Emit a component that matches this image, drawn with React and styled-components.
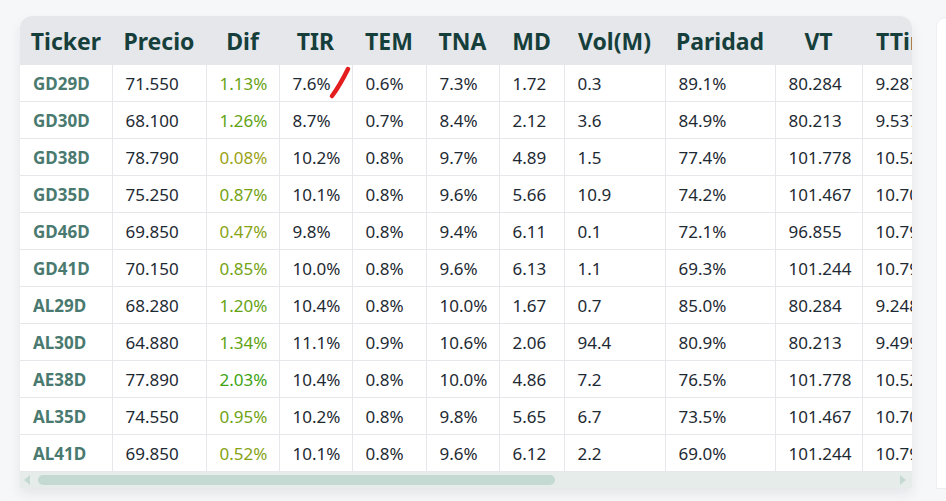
import React from 'react';
import styled, { createGlobalStyle } from 'styled-components';

const GlobalStyle = createGlobalStyle`
  html, body {
    margin: 0;
    padding: 0;
    background: #f6f7f9;
    font-family: 'Noto Sans', 'Open Sans', sans-serif;
  }
`;

const Page = styled.div`
  display: flex;
  align-items: flex-start;
  gap: 24px;
  width: 946px;
  height: 501px;
  padding: 16px 0 0 20px;
  box-sizing: border-box;
  overflow: hidden;
`;

const Card = styled.div`
  position: relative;
  flex: 0 0 892px;
  border-radius: 12px 12px 0 0;
  background: #fff;
  box-shadow: 0 6px 12px rgba(30, 40, 50, 0.08);
  overflow: hidden;
`;

const Side = styled.div`
  flex: 0 0 40px;
  height: 470px;
  margin-top: 1px;
  background: #fff;
  border: 1px solid #eceef1;
  border-radius: 10px 0 0 0;
`;

const Scroller = styled.div`
  overflow: hidden;
`;

const Table = styled.table`
  border-collapse: collapse;
  table-layout: fixed;
  width: 914px;
`;

const Th = styled.th`
  width: ${(p) => p.$w}px;
  height: 49px;
  padding: 0;
  background: #e5e7eb;
  color: #163f3c;
  font-size: 23px;
  font-weight: 700;
  text-align: center;
  white-space: nowrap;
  overflow: hidden;
  box-sizing: border-box;
`;

const Td = styled.td`
  height: 36px;
  padding: 0 13px;
  border: 1px solid #e5e7eb;
  border-top: none;
  font-size: 17px;
  color: ${(p) => p.$color || '#1e2a33'};
  font-weight: ${(p) => (p.$bold ? 700 : 400)};
  white-space: nowrap;
  overflow: hidden;
  &:first-child {
    border-left: none;
  }
`;

const ScrollBar = styled.div`
  display: flex;
  align-items: center;
  gap: 6px;
  height: 16px;
  padding: 0 6px 0 4px;
  background: #e6ecea;
`;

const Arrow = styled.div`
  width: 0;
  height: 0;
  border-top: 5px solid transparent;
  border-bottom: 5px solid transparent;
  ${(p) => (p.$dir === 'left' ? 'border-right: 6px solid #c4d9d1;' : 'border-left: 6px solid #c4d9d1;')}
`;

const Thumb = styled.div`
  width: 517px;
  height: 10px;
  margin-left: 2px;
  border-radius: 5px;
  background: #c4d9d1;
`;

const Spacer = styled.div`
  flex: 1;
`;

const Mark = styled.svg`
  position: absolute;
  left: 305px;
  top: 47px;
  pointer-events: none;
`;

const columns = [
  ['Ticker', 92],
  ['Precio', 94],
  ['Dif', 73],
  ['TIR', 73],
  ['TEM', 74],
  ['TNA', 73],
  ['MD', 65],
  ['Vol(M)', 101],
  ['Paridad', 110],
  ['VT', 87],
  ['TTir', 72],
];

const rows = [
  ['GD29D', '71.550', '1.13%', '7.6%', '0.6%', '7.3%', '1.72', '0.3', '89.1%', '80.284', '9.287%'],
  ['GD30D', '68.100', '1.26%', '8.7%', '0.7%', '8.4%', '2.12', '3.6', '84.9%', '80.213', '9.537%'],
  ['GD38D', '78.790', '0.08%', '10.2%', '0.8%', '9.7%', '4.89', '1.5', '77.4%', '101.778', '10.52%'],
  ['GD35D', '75.250', '0.87%', '10.1%', '0.8%', '9.6%', '5.66', '10.9', '74.2%', '101.467', '10.70%'],
  ['GD46D', '69.850', '0.47%', '9.8%', '0.8%', '9.4%', '6.11', '0.1', '72.1%', '96.855', '10.79%'],
  ['GD41D', '70.150', '0.85%', '10.0%', '0.8%', '9.6%', '6.13', '1.1', '69.3%', '101.244', '10.79%'],
  ['AL29D', '68.280', '1.20%', '10.4%', '0.8%', '10.0%', '1.67', '0.7', '85.0%', '80.284', '9.248%'],
  ['AL30D', '64.880', '1.34%', '11.1%', '0.9%', '10.6%', '2.06', '94.4', '80.9%', '80.213', '9.499%'],
  ['AE38D', '77.890', '2.03%', '10.4%', '0.8%', '10.0%', '4.86', '7.2', '76.5%', '101.778', '10.52%'],
  ['AL35D', '74.550', '0.95%', '10.2%', '0.8%', '9.8%', '5.65', '6.7', '73.5%', '101.467', '10.70%'],
  ['AL41D', '69.850', '0.52%', '10.1%', '0.8%', '9.6%', '6.12', '2.2', '69.0%', '101.244', '10.79%'],
];

// greener as the difference grows
const difColor = (txt) => {
  const v = Math.min(parseFloat(txt), 2.2);
  const hue = 62 + v * 20;
  return `hsl(${hue}, 78%, 36%)`;
};

export default function App() {
  return (
    <>
      <GlobalStyle />
      <Page>
        <Card>
          <Scroller>
            <Table>
              <thead>
                <tr>
                  {columns.map(([name, w]) => (
                    <Th key={name} $w={w}>
                      {name}
                    </Th>
                  ))}
                </tr>
              </thead>
              <tbody>
                {rows.map((r) => (
                  <tr key={r[0]}>
                    {r.map((cell, i) => (
                      <Td
                        key={i}
                        $bold={i === 0}
                        $color={i === 0 ? '#4a7a6f' : i === 2 ? difColor(cell) : undefined}
                      >
                        {cell}
                      </Td>
                    ))}
                  </tr>
                ))}
              </tbody>
            </Table>
          </Scroller>
          <ScrollBar>
            <Arrow $dir="left" />
            <Thumb />
            <Spacer />
            <Arrow $dir="right" />
          </ScrollBar>
          <Mark width="30" height="40" viewBox="0 0 30 40">
            <path d="M7 33 C 13 25, 18 16, 23 6" stroke="#e41e1e" strokeWidth="4.5" strokeLinecap="round" fill="none" />
          </Mark>
        </Card>
        <Side />
      </Page>
    </>
  );
}
